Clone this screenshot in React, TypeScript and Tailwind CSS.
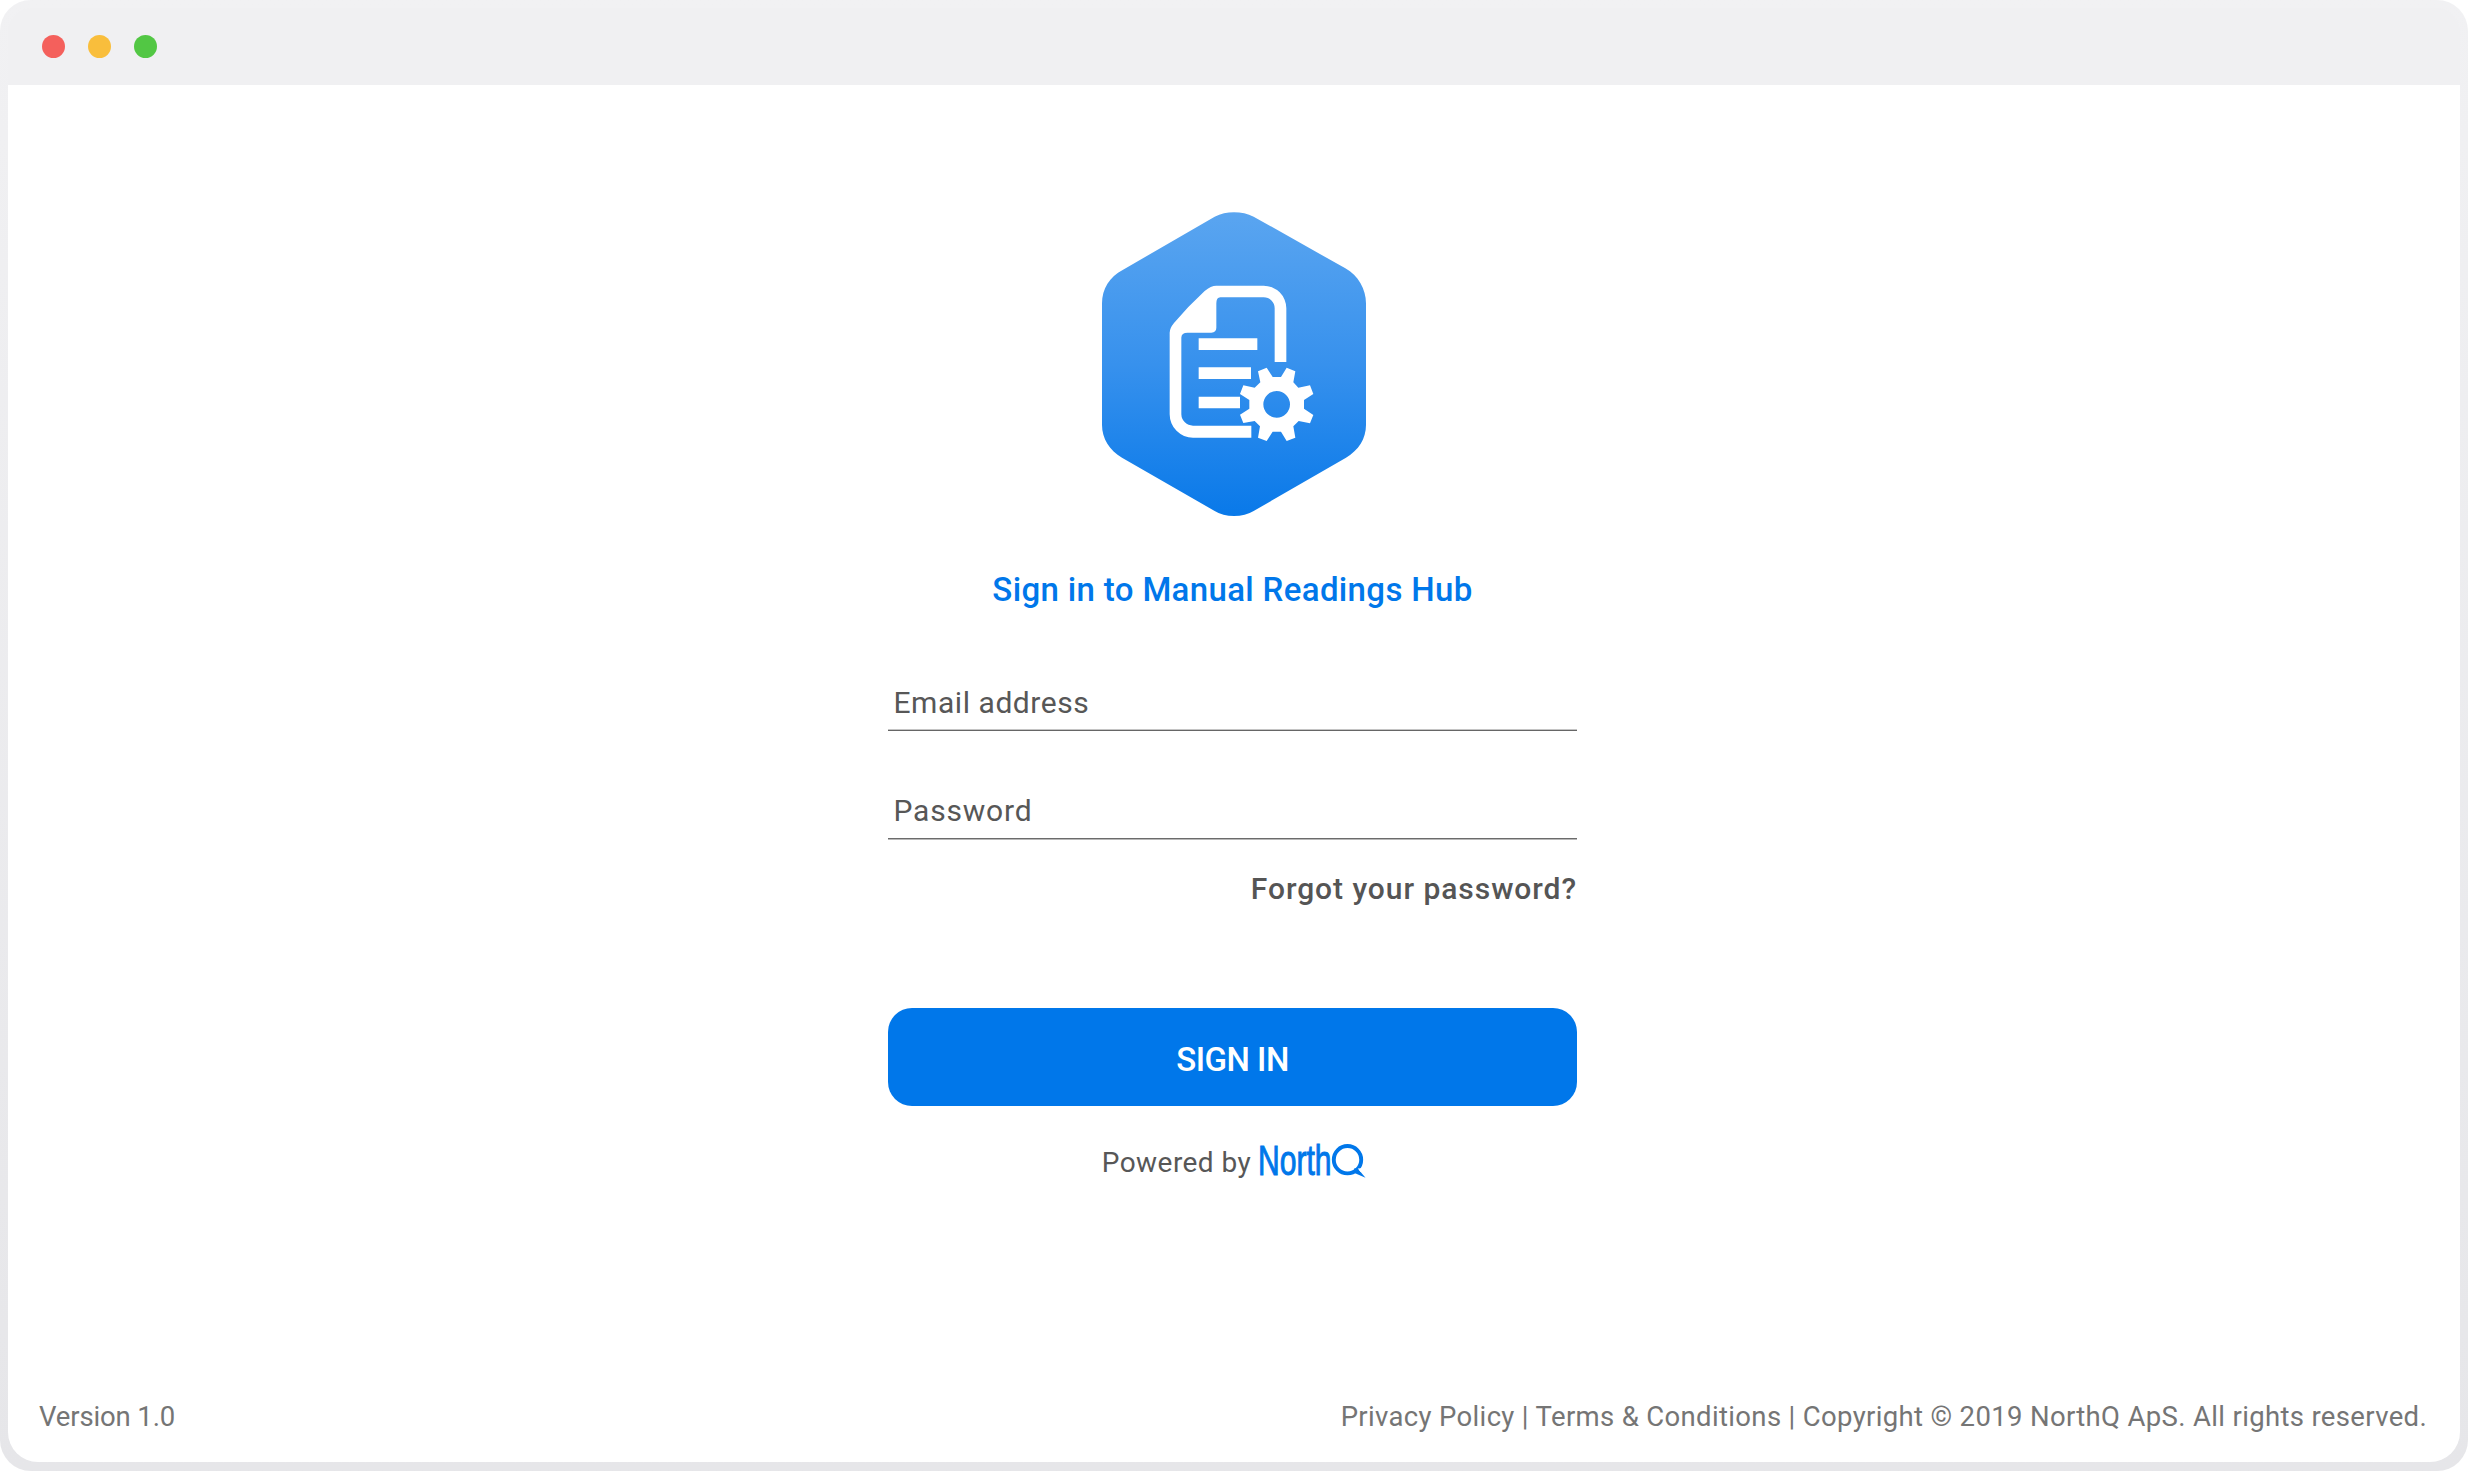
const HubLogo = () => (
  <svg className="ml-[3px] h-[304px] w-[264px]" viewBox="65 36 792 912" aria-hidden="true">
    <defs>
      <linearGradient id="hex" x1="0" y1="0" x2="0" y2="1">
        <stop offset="0" stopColor="#5aa5f0" />
        <stop offset="0.5" stopColor="#3791ed" />
        <stop offset="1" stopColor="#0979e9" />
      </linearGradient>
    </defs>
    <path
      fill="url(#hex)"
      d="M403 50Q430 37 461 37Q493 37 520 50L795 205C834 227 857 268 857 310V675C857 716 835 751 797 773L520 933Q495 948 461 948Q427 948 403 933L125 773C88 751 65 716 65 675V310C65 268 88 229 127 210Z"
    />
    <g fill="#fff">
      <path d="M618 486V325A68 68 0 0 0 550 257H408Q392 257 373 273Q322 320 281 369Q268 385 268 398V643A70 70 0 0 0 338 713H513V677H338A35 35 0 0 1 303 643V413Q303 398 322 398H393Q408 396 408 383V310Q408 292 420 292H550A33 33 0 0 1 583 325V486Z" />
      <path d="M355 415H531V450H355ZM355 502H512V537H355ZM355 590H479V625H355Z" />
      <path
        fillRule="evenodd"
        d="M540 547L533 514L559 503L577 531H602L619 503L645 514L639 547L654 563L689 556L699 582L671 600V626L699 645L689 670L655 663L639 679L645 713L619 723L602 695H577L559 723L533 713L539 679L523 663L489 669L479 644L507 626V600L479 582L489 556L523 563ZM549 613A40 40 0 1 0 629 613A40 40 0 1 0 549 613Z"
      />
    </g>
  </svg>
);

const NorthQLogo = () => (
  <svg
    className="h-[40px] w-[112px] overflow-visible"
    viewBox="0 0 112 40"
    role="img"
    aria-label="NorthQ"
  >
    <text
      x="2"
      y="34.7"
      textLength="73.5"
      lengthAdjust="spacingAndGlyphs"
      fontFamily="'Liberation Sans', Arial, sans-serif"
      fontSize="42.5"
      fill="#0077ea"
      stroke="#0077ea"
      strokeWidth="1"
    >
      North
    </text>
    <circle cx="91.5" cy="19.7" r="13.7" fill="none" stroke="#0077ea" strokeWidth="3.9" />
    <path d="M98 28.5L101.5 28.3L109.5 37.7L98.5 33Z" fill="#0077ea" />
    <path d="M101.8 28.4L106 28.2L106.5 31.5L104.7 32Z" fill="#fff" />
  </svg>
);

export default function App() {
  return (
    <div className="h-[1471px] w-[2468px] bg-white font-['Roboto',sans-serif]">
      <div className="flex h-full flex-col rounded-[31px] bg-linear-to-b from-[#f1f1f3] to-[#e6e6e9] p-2 pb-[9px]">
        <header className="flex h-[77px] shrink-0 items-center gap-[23px] rounded-t-[24px] bg-[#f0f0f2] pl-[34.4px]">
          <span className="size-[23px] rounded-full bg-[#f4605c]" />
          <span className="size-[23px] rounded-full bg-[#f9be3c]" />
          <span className="size-[23px] rounded-full bg-[#52c744]" />
        </header>

        <div className="flex min-h-0 flex-1 flex-col rounded-b-[30px] bg-white">
          <main className="flex flex-1 flex-col items-center pt-[127px] pr-[3px]">
            <HubLogo />
            <h1 className="mt-[54px] text-[33px] leading-[40px] font-medium tracking-[0.35px] whitespace-nowrap text-[#0077ea]">
              Sign in to Manual Readings Hub
            </h1>

            <form className="flex w-[689px] flex-col">
              <div className="mt-[71px] h-[50px] border-b border-[#666] pl-[5.5px] text-[30px] leading-[44px] tracking-[0.55px] text-[#575757] shadow-[inset_0_-1px_0_#c4c4c4]">
                Email address
              </div>
              <div className="mt-[58px] h-[50px] border-b border-[#6b6b6b] pl-[5.5px] text-[30px] leading-[44px] tracking-[0.8px] text-[#575757] shadow-[0_1px_0_#b8b8b8]">
                Password
              </div>
              <a className="mt-[30px] self-end text-[30px] leading-[40px] font-medium tracking-[0.95px] whitespace-nowrap text-[#555]">
                Forgot your password?
              </a>
              <button
                type="button"
                className="mt-[99px] h-[98px] rounded-[24px] bg-[#0077ea] pt-[5px] text-[33px] leading-[40px] font-medium tracking-[-0.5px] text-white"
              >
                SIGN IN
              </button>
            </form>

            <div className="mt-[34px] ml-[5px] flex h-[40px] items-start gap-[5px]">
              <span className="pt-[3px] text-[28px] leading-[40px] tracking-[0.45px] whitespace-nowrap text-[#575757]">
                Powered by
              </span>
              <NorthQLogo />
            </div>
          </main>

          <footer className="flex justify-between pr-[33px] pb-[25px] pl-[31px] text-[27.5px] leading-[40px] text-[#757575]">
            <span className="tracking-[-0.13px]">Version 1.0</span>
            <span className="tracking-[0.34px] whitespace-nowrap">
              Privacy Policy | Terms &amp; Conditions | Copyright © 2019 NorthQ ApS. All rights reserved.
            </span>
          </footer>
        </div>
      </div>
    </div>
  );
}
